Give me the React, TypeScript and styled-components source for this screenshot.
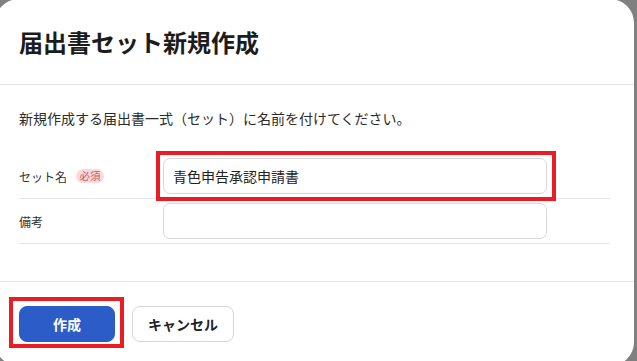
import React from 'react';
import styled, {createGlobalStyle} from 'styled-components';

const GlobalStyle = createGlobalStyle`
  html, body {
    margin: 0;
    padding: 0;
    background: #808080;
    overflow: hidden;
  }
  body {
    font-family: "Noto Sans CJK JP", "Noto Sans", sans-serif;
    color: #222;
  }
`;

const Backdrop = styled.div`
  width: 637px;
  height: 361px;
  overflow: hidden;
`;

const Dialog = styled.section`
  width: 639px;
  height: 367px;
  margin: -1px 0 0 -5px;
  background: #fff;
  border-radius: 24px;
  display: flex;
  flex-direction: column;
  box-sizing: border-box;
`;

const Header = styled.header`
  height: 86px;
  flex-shrink: 0;
  display: flex;
  align-items: center;
  padding: 0 24px;
  border-bottom: 1px solid #e4e4e4;
  box-sizing: border-box;
`;

const Title = styled.h1`
  margin: 0;
  font-size: 24px;
  font-weight: 700;
  color: #1c1c1c;
  line-height: 1;
`;

const Body = styled.div`
  padding: 23px 24px 37px;
`;

const Lead = styled.p`
  margin: 0 0 26px;
  font-size: 14px;
  line-height: 20px;
  color: #2b2b2b;
`;

const FieldRow = styled.div`
  display: grid;
  grid-template-columns: 144px 384px;
  align-items: center;
  height: 45px;
  box-sizing: border-box;
  border-bottom: 1px solid #e6e6e6;
`;

const Label = styled.label`
  display: flex;
  align-items: center;
  gap: 9px;
  font-size: 12px;
  color: #333;
`;

const RequiredBadge = styled.span`
  display: inline-flex;
  align-items: center;
  justify-content: center;
  width: 28px;
  height: 14px;
  border-radius: 7px;
  background: #fbd9dd;
  color: #c45a66;
  font-size: 10.5px;
  line-height: 1;
`;

// red annotation frame drawn over the wrapped control
const Highlight = styled.span<{$inset: string}>`
  position: relative;
  display: inline-flex;
  &::after {
    content: '';
    position: absolute;
    inset: ${p => p.$inset};
    border: 4px solid #ea1c24;
    pointer-events: none;
  }
`;

const TextInput = styled.input`
  width: 384px;
  height: 36px;
  box-sizing: border-box;
  border: 1px solid #d8d8d8;
  border-radius: 7px;
  padding: 0 9px;
  font-family: inherit;
  font-size: 14px;
  color: #222;
  background: #fff;
  outline: none;
`;

const Footer = styled.footer`
  border-top: 1px solid #e4e4e4;
  padding: 24px 24px;
  display: flex;
  gap: 17px;
`;

const Button = styled.button<{$primary?: boolean}>`
  height: 36px;
  box-sizing: border-box;
  border-radius: 8px;
  font-family: inherit;
  font-size: 14px;
  font-weight: 700;
  cursor: pointer;
  padding: ${p => (p.$primary ? '0 33px' : '0 15px')};
  background: ${p => (p.$primary ? '#2b5cc8' : '#fff')};
  color: ${p => (p.$primary ? '#fff' : '#222')};
  border: ${p => (p.$primary ? '1px solid #2b5cc8' : '1px solid #d6d6d6')};
`;

export default function App() {
  return (
    <>
      <GlobalStyle />
      <Backdrop>
        <Dialog>
          <Header>
            <Title>届出書セット新規作成</Title>
          </Header>
          <Body>
            <Lead>新規作成する届出書一式（セット）に名前を付けてください。</Lead>
            <FieldRow>
              <Label>
                セット名<RequiredBadge>必須</RequiredBadge>
              </Label>
              <Highlight $inset="-7px -9px -7px -7px">
                <TextInput defaultValue="青色申告承認申請書" />
              </Highlight>
            </FieldRow>
            <FieldRow>
              <Label>備考</Label>
              <TextInput />
            </FieldRow>
          </Body>
          <Footer>
            <Highlight $inset="-9px -9px -6px -10px">
              <Button $primary>作成</Button>
            </Highlight>
            <Button>キャンセル</Button>
          </Footer>
        </Dialog>
      </Backdrop>
    </>
  );
}
